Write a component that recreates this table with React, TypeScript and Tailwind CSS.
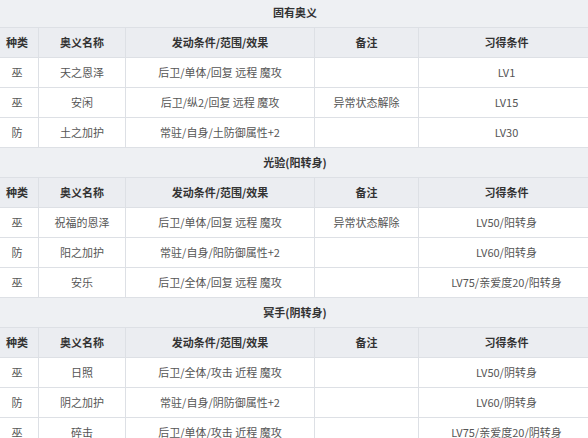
const COLS = 'grid grid-cols-[43px_87px_189px_104px_175px]'

type Row = [string, string, string, string, string]

const SECTIONS: { title: string; rows: Row[] }[] = [
  {
    title: '固有奥义',
    rows: [
      ['巫', '天之恩泽', '后卫/单体/回复 远程 魔攻', '', 'LV1'],
      ['巫', '安闲', '后卫/纵2/回复 远程 魔攻', '异常状态解除', 'LV15'],
      ['防', '土之加护', '常驻/自身/土防御属性+2', '', 'LV30'],
    ],
  },
  {
    title: '光验(阳转身)',
    rows: [
      ['巫', '祝福的恩泽', '后卫/单体/回复 远程 魔攻', '异常状态解除', 'LV50/阳转身'],
      ['防', '阳之加护', '常驻/自身/阳防御属性+2', '', 'LV60/阳转身'],
      ['巫', '安乐', '后卫/全体/回复 远程 魔攻', '', 'LV75/亲爱度20/阳转身'],
    ],
  },
  {
    title: '冥手(阴转身)',
    rows: [
      ['巫', '日照', '后卫/全体/攻击 近程 魔攻', '', 'LV50/阴转身'],
      ['防', '阴之加护', '常驻/自身/阴防御属性+2', '', 'LV60/阴转身'],
      ['巫', '碎击', '后卫/单体/攻击 近程 魔攻', '', 'LV75/亲爱度20/阴转身'],
    ],
  },
]

const HEAD: Row = ['种类', '奥义名称', '发动条件/范围/效果', '备注', '习得条件']

function Line({ cells, head }: { cells: Row; head?: boolean }) {
  return (
    <div
      className={`${COLS} h-[30px] border-b border-[#dde0e5] ${
        head ? 'bg-[#ebedf1] font-bold text-[#333]' : 'bg-white text-[#555]'
      }`}
    >
      {cells.map((c, i) => (
        <div
          key={i}
          className={`flex items-center justify-center ${i < 4 ? 'border-r border-[#dde0e5]' : ''}`}
        >
          {c}
        </div>
      ))}
    </div>
  )
}

export default function App() {
  return (
    <div className="h-[438px] w-[588px] overflow-hidden bg-white">
      <div
        className="-ml-1 -mt-[2px] w-[598px] text-[11px] leading-none"
        style={{ fontFamily: '"Microsoft YaHei", "Noto Sans CJK SC", sans-serif' }}
      >
        {SECTIONS.map((s) => (
          <div key={s.title}>
            <div className="flex h-[30px] items-center justify-center border-b border-[#dde0e5] bg-[#eef0f3] font-bold text-[#333]">
              {s.title}
            </div>
            <Line cells={HEAD} head />
            {s.rows.map((r) => (
              <Line key={r[1]} cells={r} />
            ))}
          </div>
        ))}
      </div>
    </div>
  )
}
